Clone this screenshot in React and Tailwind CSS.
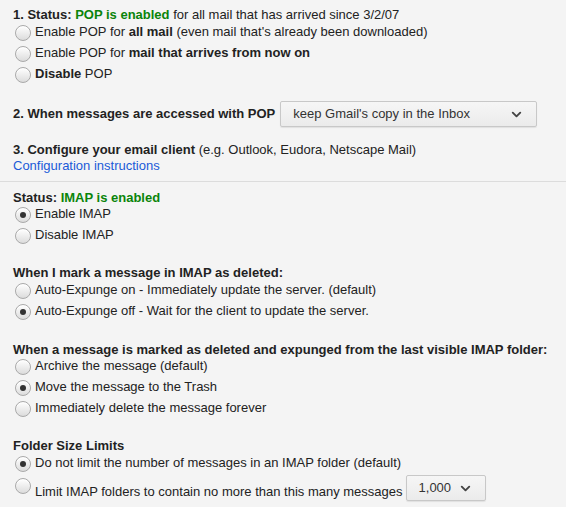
import { ChevronDown } from "lucide-react";

function Radio({ checked }) {
	return (
		<span className="mt-[3px] ml-[3px] mr-[4px] flex h-[16px] w-[16px] shrink-0 items-center justify-center rounded-full border border-[#a9a9a9] bg-gradient-to-b from-white to-[#dcdcdc] shadow-[inset_0_1px_1px_rgba(255,255,255,0.9)]">
			{checked && <span className="h-[6px] w-[6px] rounded-full bg-[#333]" />}
		</span>
	);
}

function Option({ checked, children }) {
	return (
		<div className="flex h-[21px] items-start">
			<Radio checked={checked} />
			<span className="mt-[2px] leading-[16px]">{children}</span>
		</div>
	);
}

function Select({ label, className }) {
	return (
		<div
			className={
				"flex h-[26px] items-center justify-between rounded-[2px] border border-[#c8c8c8] bg-gradient-to-b from-[#f6f6f6] to-[#ebebeb] pl-[12px] pr-[12px] text-[#333] shadow-[0_1px_1px_rgba(0,0,0,0.08)] " +
				className
			}
		>
			<span>{label}</span>
			<ChevronDown size={15} strokeWidth={3} className="text-[#444]" />
		</div>
	);
}

function Heading({ children }) {
	return <div className="h-[16px] leading-[16px] font-bold">{children}</div>;
}

export default function App() {
	return (
		<div className="h-[507px] w-[566px] overflow-hidden bg-[#f4f4f4] font-['Liberation_Sans',Arial,sans-serif] text-[13px] text-[#222]">
			<div className="px-[13px] pt-[7px]">
				<div className="h-[16px] leading-[16px]">
					<b>1. Status: </b>
					<b className="text-[#0a840a]">POP is enabled</b> for all mail that
					has arrived since 3/2/07
				</div>
				<div className="-ml-[1px] mt-[-1px]">
					<Option>
						Enable POP for <b>all mail</b> (even mail that's already been
						downloaded)
					</Option>
					<Option>
						Enable POP for <b>mail that arrives from now on</b>
					</Option>
					<Option>
						<b>Disable</b> POP
					</Option>
				</div>
				<div className="mt-[16px] flex h-[26px] items-center">
					<b className="mr-[5px]">2. When messages are accessed with POP</b>
					<Select label="keep Gmail's copy in the Inbox" className="w-[257px]" />
				</div>
				<div className="mt-[15px] h-[16px] leading-[16px]">
					<b>3. Configure your email client</b> (e.g. Outlook, Eudora,
					Netscape Mail)
				</div>
				<div className="h-[16px] leading-[16px] text-[#1a5ad8]">
					Configuration instructions
				</div>
			</div>
			<div className="mt-[7px] h-px bg-[#dcdcdc]" />
			<div className="px-[13px] pt-[8px]">
				<Heading>
					Status: <span className="text-[#0a840a]">IMAP is enabled</span>
				</Heading>
				<div className="-ml-[1px] mt-[-2px]">
					<Option checked>Enable IMAP</Option>
					<Option>Disable IMAP</Option>
				</div>
				<div className="mt-[19px]">
					<Heading>When I mark a message in IMAP as deleted:</Heading>
				</div>
				<div className="-ml-[1px] mt-[-1px]">
					<Option>Auto-Expunge on - Immediately update the server. (default)</Option>
					<Option checked>
						Auto-Expunge off - Wait for the client to update the server.
					</Option>
				</div>
				<div className="mt-[20px]">
					<Heading>
						When a message is marked as deleted and expunged from the last
						visible IMAP folder:
					</Heading>
				</div>
				<div className="-ml-[1px] mt-[-2px]">
					<Option>Archive the message (default)</Option>
					<Option checked>Move the message to the Trash</Option>
					<Option>Immediately delete the message forever</Option>
				</div>
				<div className="mt-[19px]">
					<Heading>Folder Size Limits</Heading>
				</div>
				<div className="-ml-[1px] mt-[-1px]">
					<Option checked>
						Do not limit the number of messages in an IMAP folder (default)
					</Option>
					<div className="mt-[1px] flex items-start">
						<Radio />
						<span className="mt-[9px] leading-[16px]">
							Limit IMAP folders to contain no more than this many messages
						</span>
						<Select label="1,000" className="ml-[3px] w-[80px]" />
					</div>
				</div>
			</div>
		</div>
	);
}
